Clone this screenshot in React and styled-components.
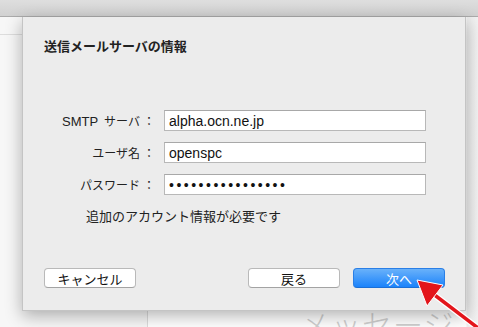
import React from "react";
import styled, { createGlobalStyle } from "styled-components";

const GlobalStyle = createGlobalStyle`
  html, body { margin: 0; padding: 0; background: #ffffff; }
  body { font-family: "Liberation Sans", "Noto Sans CJK JP", sans-serif; }
`;

const Window = styled.div`
  position: relative;
  width: 478px;
  height: 327px;
  overflow: hidden;
  background: #ffffff;
  display: flex;
  flex-direction: column;
`;

const Toolbar = styled.div`
  height: 16px;
  flex: none;
  background: linear-gradient(#dedede, #d1d1d1);
  border-bottom: 1px solid #ababab;
`;

const Body = styled.div`
  flex: 1;
  display: flex;
`;

const Sidebar = styled.div`
  width: 147px;
  flex: none;
  border-right: 1px solid #dcdcdc;
  background: #f7f7f7;
`;

const SidebarHeader = styled.div`
  height: 17px;
  border-bottom: 1px solid #dddddd;
`;

const Content = styled.div`
  flex: 1;
  padding: 291px 0 0 152px;
  background: linear-gradient(90deg, #ffffff 0, #ffffff 318px, #eeeeee 319px, #f2f2f2 100%);
`;

const Placeholder = styled.div`
  font-family: "Noto Sans CJK JP", sans-serif;
  font-weight: 300;
  font-size: 30px;
  line-height: 30px;
  letter-spacing: 1px;
  color: #d0d0d0;
  white-space: nowrap;
`;

const Sheet = styled.div`
  position: absolute;
  left: 22px;
  top: 17px;
  width: 444px;
  height: 294px;
  box-sizing: border-box;
  background: #ececec;
  border: 1px solid #c4c4c4;
  border-top: none;
  box-shadow: 0 5px 16px rgba(0, 0, 0, 0.3);
  display: flex;
  flex-direction: column;
  padding: 21px 20px 22px 21px;
  font-family: "Liberation Sans", "Noto Sans CJK JP", sans-serif;
  color: #222;
`;

const Title = styled.div`
  font-family: "Noto Sans CJK JP", sans-serif;
  font-weight: 700;
  font-size: 13px;
  line-height: 16px;
  height: 16px;
`;

const Form = styled.div`
  margin-top: 56px;
  display: grid;
  grid-template-columns: 111px 262px;
  column-gap: 9px;
  row-gap: 11px;
  align-items: center;
`;

const Label = styled.div`
  font-family: "Noto Sans CJK JP", sans-serif;
  font-size: 12px;
  text-align: right;
  white-space: nowrap;
  color: #222;
`;

const Latin = styled.span`
  font-family: "Liberation Sans", sans-serif;
  font-size: 13px;
  margin-right: 6px;
`;

const Colon = styled.span`
  display: inline-block;
  width: 12px;
  margin-left: 3px;
  text-align: center;
  font-size: 12px;
`;

const Field = styled.div`
  height: 21px;
  box-sizing: border-box;
  background: #ffffff;
  border: 1px solid #b8b8b8;
  border-top-color: #a8a8a8;
  padding: 0 4px;
  display: flex;
  align-items: center;
  font-family: "Liberation Sans", sans-serif;
  font-size: 14px;
  color: #111;
  letter-spacing: ${(p) => (p.$secret ? "2.5px" : "0")};
`;

const Note = styled.div`
  margin: 13px 0 0 42px;
  font-family: "Noto Sans CJK JP", sans-serif;
  font-size: 13px;
  line-height: 16px;
  color: #222;
`;

const Footer = styled.div`
  margin-top: auto;
  display: flex;
  align-items: center;
  gap: 13px;
`;

const Spacer = styled.div`
  flex: 1;
`;

const Button = styled.div`
  width: 92px;
  height: 20px;
  box-sizing: border-box;
  border-radius: 4px;
  display: flex;
  align-items: center;
  justify-content: center;
  font-family: "Noto Sans CJK JP", sans-serif;
  font-size: 13px;
  background: ${(p) =>
    p.$primary ? "linear-gradient(#69b1fa, #1b83fb)" : "#ffffff"};
  border: 1px solid ${(p) => (p.$primary ? "#2a7fe6" : "#b9b9b9")};
  border-bottom-color: ${(p) => (p.$primary ? "#1a6fd6" : "#a3a3a3")};
  color: ${(p) => (p.$primary ? "#ffffff" : "#111")};
`;

const Arrow = styled.svg`
  position: absolute;
  left: 0;
  top: 0;
  pointer-events: none;
`;

export default function App() {
  return (
    <>
      <GlobalStyle />
      <Window>
        <Toolbar />
        <Body>
          <Sidebar>
            <SidebarHeader />
          </Sidebar>
          <Content>
            <Placeholder>メッセージ</Placeholder>
          </Content>
        </Body>

        <Sheet>
          <Title>送信メールサーバの情報</Title>
          <Form>
            <Label>
              <Latin>SMTP</Latin>サーバ<Colon>：</Colon>
            </Label>
            <Field>alpha.ocn.ne.jp</Field>
            <Label>
              ユーザ名<Colon>：</Colon>
            </Label>
            <Field>openspc</Field>
            <Label>
              パスワード<Colon>：</Colon>
            </Label>
            <Field $secret>••••••••••••••••</Field>
          </Form>
          <Note>追加のアカウント情報が必要です</Note>
          <Footer>
            <Button>キャンセル</Button>
            <Spacer />
            <Button>戻る</Button>
            <Button $primary>次へ</Button>
          </Footer>
        </Sheet>

        <Arrow width="478" height="327" viewBox="0 0 478 327">
          <line x1="478" y1="328" x2="432" y2="293" stroke="#ffffff" strokeWidth="6" />
          <line x1="478" y1="328" x2="432" y2="293" stroke="#e3151b" strokeWidth="3.5" />
          <polygon points="417,280 427,306 443,285" fill="#e3151b" stroke="#ffffff" strokeWidth="1" />
        </Arrow>
      </Window>
    </>
  );
}
